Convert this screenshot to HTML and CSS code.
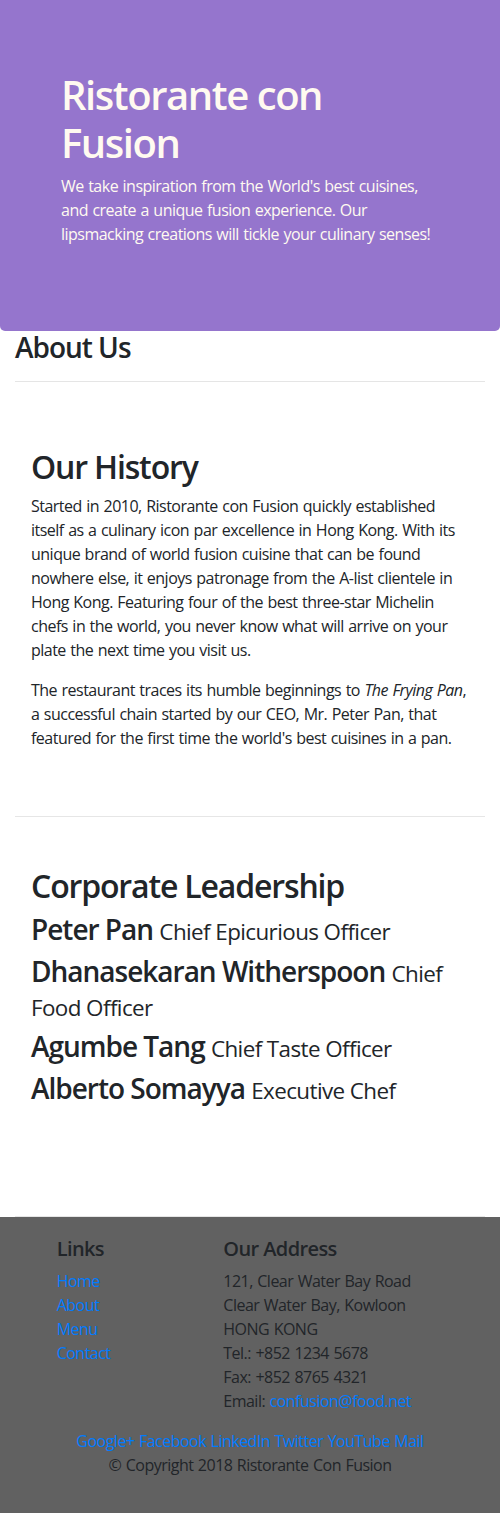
FILE: index.html
```html
<!DOCTYPE html>
<html lang="en">
<head>
<meta charset="utf-8">
<title>Ristorante con Fusion: About Us</title>
<link rel="stylesheet" href="styles.css">
</head>
<body>
<header class="jumbotron">
  <div class="jumbo-inner">
    <h1 class="jumbo-title">Ristorante con Fusion</h1>
    <p class="jumbo-text">We take inspiration from the World's best cuisines, and create a unique fusion experience. Our lipsmacking creations will tickle your culinary senses!</p>
  </div>
</header>

<main class="container">
  <div class="page-head">
    <h3 class="page-title">About Us</h3>
    <hr class="rule">
  </div>

  <section class="row-content">
    <div class="col">
      <h2 class="section-title">Our History</h2>
      <p class="para">Started in 2010, Ristorante con Fusion quickly established itself as a culinary icon par excellence in Hong Kong. With its unique brand of world fusion cuisine that can be found nowhere else, it enjoys patronage from the A-list clientele in Hong Kong. Featuring four of the best three-star Michelin chefs in the world, you never know what will arrive on your plate the next time you visit us.</p>
      <p class="para">The restaurant traces its humble beginnings to <em>The Frying Pan</em>, a successful chain started by our CEO, Mr. Peter Pan, that featured for the first time the world's best cuisines in a pan.</p>
    </div>
  </section>

  <section class="row-content">
    <div class="col">
      <h2 class="section-title">Corporate Leadership</h2>
      <h3 class="leader">Peter Pan <small class="role">Chief Epicurious Officer</small></h3>
      <h3 class="leader">Dhanasekaran Witherspoon <small class="role">Chief Food Officer</small></h3>
      <h3 class="leader">Agumbe Tang <small class="role">Chief Taste Officer</small></h3>
      <h3 class="leader">Alberto Somayya <small class="role">Executive Chef</small></h3>
    </div>
  </section>
</main>

<footer class="footer">
  <div class="footer-row">
    <div class="footer-links">
      <h5 class="footer-title">Links</h5>
      <ul class="link-list">
        <li><a href="#">Home</a></li>
        <li><a href="#">About</a></li>
        <li><a href="#">Menu</a></li>
        <li><a href="#">Contact</a></li>
      </ul>
    </div>
    <div class="footer-address">
      <h5 class="footer-title">Our Address</h5>
      <address class="address">
        121, Clear Water Bay Road<br>
        Clear Water Bay, Kowloon<br>
        HONG KONG<br>
        Tel.: +852 1234 5678<br>
        Fax: +852 8765 4321<br>
        Email: <a href="#">confusion@food.net</a>
      </address>
    </div>
  </div>
  <div class="social">
    <a href="#">Google+</a>
    <a href="#">Facebook</a>
    <a href="#">LinkedIn</a>
    <a href="#">Twitter</a>
    <a href="#">YouTube</a>
    <a href="#">Mail</a>
  </div>
  <p class="copyright">© Copyright 2018 Ristorante Con Fusion</p>
</footer>
</body>
</html>
```

FILE: styles.css
```css
* { box-sizing: border-box; }

body {
  margin: 0;
  font-family: "Open Sans", "Noto Sans", sans-serif;
  font-size: 16px;
  line-height: 1.5;
  letter-spacing: -0.032em;
  word-spacing: 0.05em;
  color: #212529;
  background: #fff;
}

a { color: #007bff; text-decoration: none; }

.jumbotron {
  background: #9575cd;
  color: #fffaf0;
  border-radius: 0 0 5px 5px;
  padding: 71px 0 69px 61px;
}

.jumbo-inner { width: 378px; }

.jumbo-title {
  margin: 0 0 7px;
  font-size: 40px;
  line-height: 1.2;
  font-weight: 600;
  letter-spacing: -0.036em;
  word-spacing: 0;
}

.jumbo-text {
  margin: 0 0 16px;
}

.container { padding: 0 15px; }

.page-title {
  margin: 0;
  font-size: 28px;
  line-height: 1.2;
  font-weight: 600;
  letter-spacing: -0.036em;
  word-spacing: 0;
}

.rule {
  margin: 16px 0;
  border: 0;
  border-top: 1px solid rgba(0, 0, 0, 0.1);
}

.row-content {
  padding: 50px 0;
  min-height: 400px;
  border-bottom: 1px solid #e6e6e6;
}

.col { padding: 0 16px; }

.section-title {
  margin: 0 0 8px;
  font-size: 32px;
  line-height: 1.2;
  font-weight: 600;
  letter-spacing: -0.036em;
  word-spacing: 0;
}

.para { margin: 0 0 16px; }

.leader {
  margin: 0 0 8px;
  font-size: 28px;
  line-height: 1.2;
  font-weight: 600;
  letter-spacing: -0.036em;
  word-spacing: 0;
}

.role {
  font-size: 80%;
  font-weight: 400;
  letter-spacing: -0.026em;
}

.footer {
  background: #616161;
  padding: 20px 0;
}

.footer-row {
  display: flex;
  padding-left: 41.67px;
}

.footer-links { width: 166.67px; padding: 0 15px; }
.footer-address { width: 291.67px; padding: 0 15px; }

.footer-title {
  margin: 0 0 8px;
  font-size: 20px;
  line-height: 1.2;
  font-weight: 600;
  letter-spacing: -0.03em;
  word-spacing: 0;
}

.link-list {
  list-style: none;
  margin: 0;
  padding: 0;
}

.address {
  font-style: normal;
  margin: 0 0 16px;
}

.social { text-align: center; }

.copyright {
  text-align: center;
  margin: 0 0 16px;
}
```
